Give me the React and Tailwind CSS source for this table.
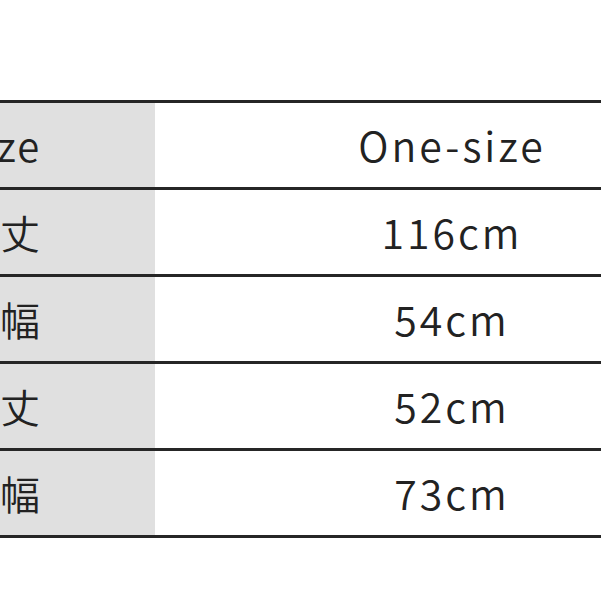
import React from 'react'

const rows = [
  { label: 'Size', value: 'One-size' },
  { label: '着丈', value: '116cm' },
  { label: '身幅', value: '54cm' },
  { label: '袖丈', value: '52cm' },
  { label: '裾幅', value: '73cm' },
]

export default function App() {
  return (
    <div
      className="w-[601px] h-[601px] overflow-hidden bg-white text-[#222]"
      style={{ fontFamily: '"Noto Sans CJK JP", "Noto Sans", sans-serif' }}
    >
      <div className="mt-[100px] -ml-[155px] w-[904px] border-t-[3px] border-[#262626]">
        {rows.map((row) => (
          <div key={row.label} className="flex h-[87px] border-b-[3px] border-[#262626]">
            <div className="w-[310px] bg-[#e0e0e0] flex items-center justify-center text-[40px] font-[350] tracking-[2px]">
              {row.label}
            </div>
            <div className="flex-1 flex items-center justify-center text-[41px] font-[350] tracking-[3px]">
              {row.value}
            </div>
          </div>
        ))}
      </div>
    </div>
  )
}
